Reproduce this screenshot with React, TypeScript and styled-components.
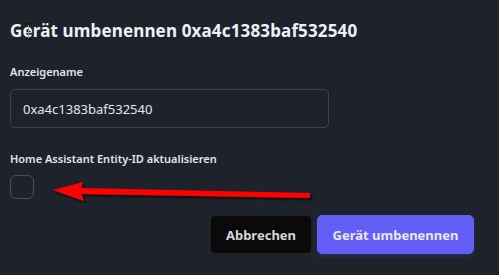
import React from "react";
import styled, { createGlobalStyle } from "styled-components";

const Global = createGlobalStyle`
  html, body { margin: 0; padding: 0; background: #1e232b; }
  body { font-family: "Noto Sans", "Open Sans", sans-serif; overflow: hidden; }
  * { box-sizing: border-box; }
`;

const Dialog = styled.div`
  position: relative;
  width: 499px;
  height: 275px;
  background: #1e232b;
  padding: 18px 25px 0 10px;
  display: flex;
  flex-direction: column;
`;

const Title = styled.h2`
  margin: 0;
  font-size: 17px;
  line-height: 26px;
  font-weight: 700;
  color: #eef1f6;
  letter-spacing: 0.15px;
`;

const Field = styled.div<{ $top: number }>`
  display: flex;
  flex-direction: column;
  align-items: flex-start;
  margin-top: ${(p) => p.$top}px;
`;

const Label = styled.label`
  font-size: 11px;
  line-height: 16px;
  font-weight: 600;
  color: #e3e6ea;
`;

const Input = styled.input`
  margin-top: 9px;
  width: 319px;
  height: 39px;
  border: 1px solid #3d434d;
  border-radius: 5px;
  background: #1e232b;
  color: #e4e6ea;
  font-family: inherit;
  font-size: 13px;
  padding: 0 12px;
  outline: none;
`;

const Check = styled.span`
  margin-top: 8px;
  width: 24px;
  height: 24px;
  border: 1px solid #4a505b;
  border-radius: 6px;
  background: #1e232b;
`;

const Actions = styled.div`
  display: flex;
  justify-content: flex-end;
  gap: 5px;
  margin-top: 16px;
`;

const Button = styled.button<{ $primary?: boolean; $w: number }>`
  width: ${(p) => p.$w}px;
  height: 39px;
  padding: 0;
  border-radius: 5px;
  font-family: inherit;
  font-size: 13px;
  font-weight: 700;
  border: 1px solid ${(p) => (p.$primary ? "#625ef6" : "#1f2126")};
  background: ${(p) => (p.$primary ? "#625ef6" : "#0a0a0b")};
  color: ${(p) => (p.$primary ? "#e9e9ff" : "#d6d7d9")};
  box-shadow: ${(p) => (p.$primary ? "0 2px 4px rgba(60,60,160,0.35)" : "none")};
`;

const Arrow = styled.svg`
  position: absolute;
  left: 48px;
  top: 176px;
  width: 270px;
  height: 32px;
  pointer-events: none;
`;

const Cursor = styled.svg`
  position: absolute;
  left: 25px;
  top: 23px;
  width: 7px;
  height: 17px;
`;

export default function App() {
  return (
    <>
      <Global />
      <Dialog>
        <Title>Gerät umbenennen 0xa4c1383baf532540</Title>
        <Field $top={20}>
          <Label>Anzeigename</Label>
          <Input defaultValue="0xa4c1383baf532540" />
        </Field>
        <Field $top={23}>
          <Label>Home Assistant Entity-ID aktualisieren</Label>
          <Check />
        </Field>
        <Actions>
          <Button $w={102}>Abbrechen</Button>
          <Button $primary $w={157}>Gerät umbenennen</Button>
        </Actions>
        <Arrow viewBox="0 0 270 32">
          <defs>
            <filter id="sh" x="-10%" y="-50%" width="120%" height="200%">
              <feDropShadow dx="2" dy="2" stdDeviation="1.2" floodColor="#000" floodOpacity="0.7" />
            </filter>
          </defs>
          <g filter="url(#sh)" fill="#ff0000">
            <polygon points="5,14 35,6 33,12 262,17 262,22 33,18 36,25" />
          </g>
        </Arrow>
        <Cursor viewBox="0 0 7 17">
          <path d="M0.5 0.5 H2.5 L3.5 1.5 L4.5 0.5 H6.5 M3.5 1.5 V15.5 M0.5 16.5 H2.5 L3.5 15.5 L4.5 16.5 H6.5 M1.5 8.5 H5.5" stroke="#111" strokeWidth="1" fill="none" />
          <path d="M3.5 2 V15" stroke="#fff" strokeWidth="0.6" fill="none" />
        </Cursor>
      </Dialog>
    </>
  );
}
